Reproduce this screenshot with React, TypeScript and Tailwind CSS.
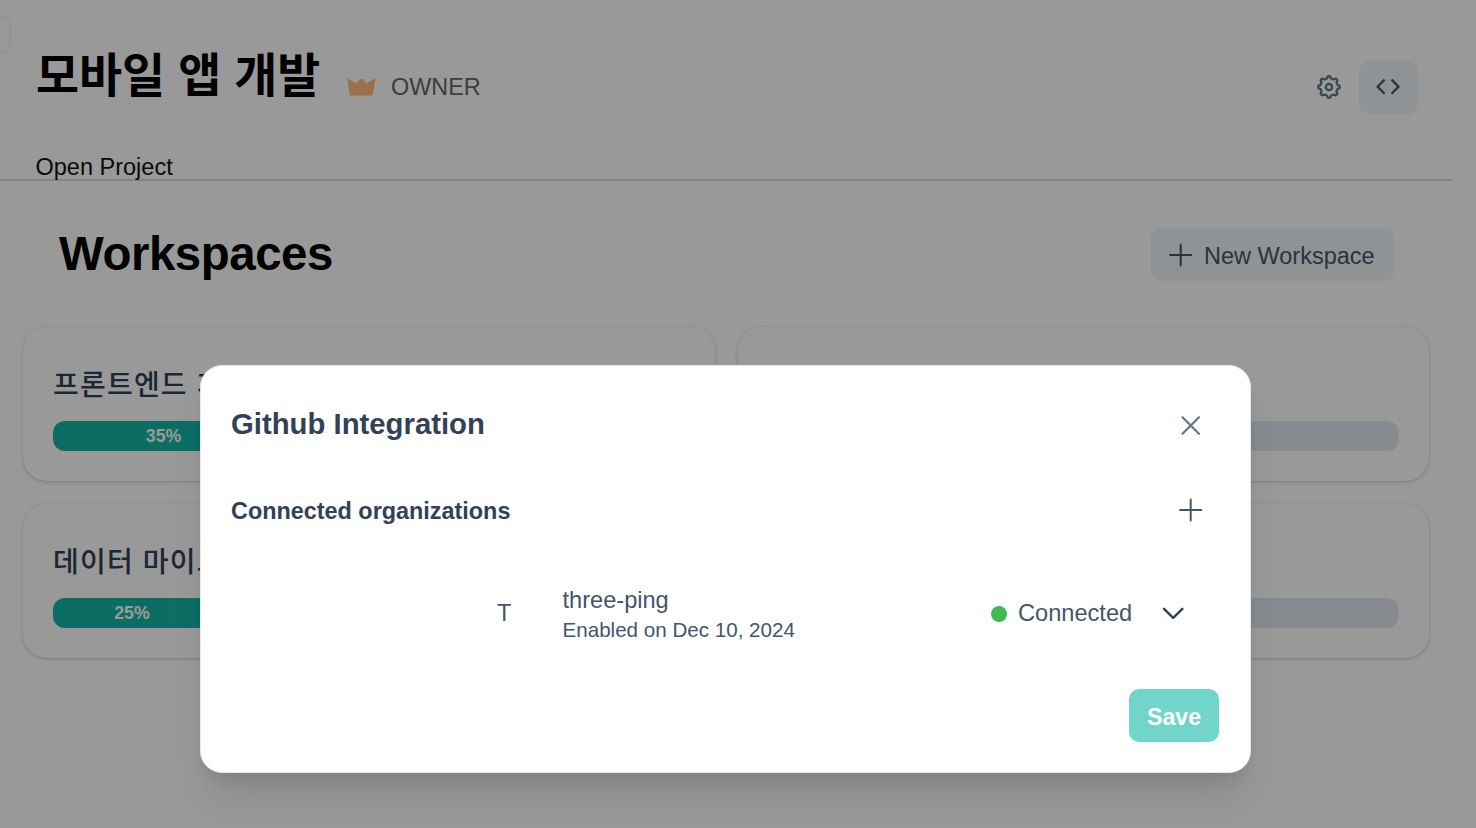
import React from "react";

const strokeProps = { fill: "none", stroke: "currentColor", strokeLinecap: "round" as const, strokeLinejoin: "round" as const };

function gearPath() {
  const pts: string[] = [];
  for (let i = 0; i < 8; i++) {
    const a = (i * Math.PI) / 4;
    const p = (r: number, d: number) => `${(13 + r * Math.sin(a + d)).toFixed(2)},${(13 - r * Math.cos(a + d)).toFixed(2)}`;
    pts.push(`${i === 0 ? "M" : "L"}${p(9, -0.21)} Q${p(10.9, -0.17)} ${p(10.9, 0)} Q${p(10.9, 0.17)} ${p(9, 0.21)} Q${p(8.2, 0.393)} ${p(9, 0.575)}`);
  }
  return pts.join(" ") + " Z";
}

function Gear() {
  return (
    <svg width="26" height="26" viewBox="0 0 26 26" {...strokeProps} strokeWidth="2.3">
      <path d={gearPath()} />
      <circle cx="13" cy="13" r="3.1" />
    </svg>
  );
}

function Code() {
  return (
    <svg width="26" height="26" viewBox="0 0 26 26" {...strokeProps} strokeWidth="2.3" strokeLinecap="butt" strokeLinejoin="miter">
      <path d="M8.6 5.6 1.7 12.7 8.6 19.8M15.6 5.6 22.5 12.7 15.6 19.8" />
    </svg>
  );
}

function Plus() {
  return (
    <svg width="24" height="24" viewBox="0 0 24 24" {...strokeProps} strokeWidth="2">
      <path d="M11.7 1.4v21.2M1.1 12h21.2" />
    </svg>
  );
}

function Crown() {
  return (
    <svg width="29" height="18" viewBox="0 0 29 18" fill="#fdbb7a">
      <path d="M0 0 8.8 5.6 14.3 .2 19.8 5.6 28.6 0 25.6 17.6H3Z" />
    </svg>
  );
}

function Card({ title, value, width }: { title: string; value?: string; width: string }) {
  return (
    <div className="h-[154px] rounded-[24px] bg-white px-[30px] pt-[39px] shadow-[0_1px_4px_rgba(0,0,0,0.14),0_1px_2px_rgba(0,0,0,0.08)]">
      <div className="h-[36px] whitespace-nowrap text-[28px] leading-[39px] font-medium tracking-[1.2px] text-slate-700">{title}</div>
      <div className="mt-[19.4px] h-[30px] overflow-hidden rounded-[12px] bg-slate-200">
        {value && (
          <div className="flex h-full items-center justify-center bg-[#14b8a6] pt-px text-[17.7px] font-semibold text-white" style={{ width }}>
            {value}
          </div>
        )}
      </div>
    </div>
  );
}

export default function App() {
  return (
    <div className="relative h-[828px] w-[1476px] overflow-hidden bg-white font-['Liberation_Sans','Noto_Sans_CJK_KR',sans-serif]">
      <div className="absolute top-[17px] -left-[40px] h-[36px] w-[51px] rounded-[9px] border-2 border-slate-100" />
      <header className="flex h-[181px] w-[1453px] flex-col justify-between border-b-2 border-[#dcdcdc]">
        <div className="flex items-start justify-between pr-[35px] pl-[36px]">
          <div className="flex">
            <h1 className="mt-[41px] w-[311px] whitespace-nowrap text-[46.8px] leading-[70px] font-bold text-black">모바일 앱 개발</h1>
            <div className="mt-[78px]"><Crown /></div>
            <span className="mt-[72px] ml-[15px] text-[23.4px] leading-[30px] text-[#666]">OWNER</span>
          </div>
          <div className="mt-[60px] flex items-center gap-[17px]">
            <span className="text-slate-500"><Gear /></span>
            <span className="mt-px flex h-[53px] w-[59px] items-center justify-center rounded-[10px] bg-slate-100 pb-px text-slate-600"><Code /></span>
          </div>
        </div>
        <div className="h-[26px] pl-[35.5px] text-[23.5px] leading-[28px] text-[#111]">Open Project</div>
      </header>
      <div className="flex h-[145.6px] items-start justify-between pr-[82px] pl-[59px]">
        <h2 className="mt-[43px] text-[47.4px] leading-[60px] font-bold tracking-[-0.45px] text-black">Workspaces</h2>
        <button className="mt-[47px] flex h-[53px] w-[243px] items-center gap-[11px] rounded-[10px] bg-slate-100 pl-[18px] text-[23.5px] whitespace-nowrap text-slate-600">
          <Plus />
          <span className="pt-[4px]">New Workspace</span>
        </button>
      </div>
      <main className="grid w-[1429px] grid-cols-2 gap-[23px] pl-[23px]">
        <Card title="프론트엔드 개발" value="35%" width="35%" />
        <Card title="백엔드 개발" width="0%" />
        <Card title="데이터 마이그레이션" value="25%" width="25%" />
        <Card title="배포" width="0%" />
      </main>
      <div className="absolute inset-0 bg-black/40">
        <section className="absolute top-[365px] left-[200px] flex h-[408px] w-[1051px] flex-col rounded-[22px] border border-slate-200 bg-white px-[30px] text-slate-600 shadow-[0_30px_37px_-7px_rgba(0,0,0,0.1),0_12px_15px_-9px_rgba(0,0,0,0.1)]">
          <div className="mt-[40px] flex h-[38px] items-center justify-between pr-[17px] text-slate-700">
            <h3 className="pb-[2px] text-[29.3px] leading-[36px] font-semibold">Github Integration</h3>
            <svg className="text-slate-500" width="24" height="24" viewBox="0 0 24 24" {...strokeProps} strokeWidth="2.2"><path d="M3.5 4.3l16.5 16.5M20 4.3l-16.5 16.5" /></svg>
          </div>
          <div className="mt-[47px] flex h-[38px] items-center justify-between pr-[17px]">
            <h4 className="pt-[3px] text-[23.4px] font-semibold text-slate-700">Connected organizations</h4>
            <Plus />
          </div>
          <div className="mt-[54px] flex h-[62px] items-center pl-[266px] text-[23.6px]">
            <span className="w-[65px]">T</span>
            <div className="w-[429px] pl-[0.5px]">
              <div className="leading-[32px]">three-ping</div>
              <div className="-mt-px text-[20.6px] leading-[29px]">Enabled on Dec 10, 2024</div>
            </div>
            <span className="mr-[11px] size-[16px] rounded-full bg-[#3fb950]" />
            <span>Connected</span>
            <svg className="ml-[29px] text-slate-700" width="24" height="24" viewBox="0 0 24 24" {...strokeProps} strokeWidth="2.4"><path d="M3 6.8l9.2 9 9.2-9" /></svg>
          </div>
          <button className="mt-[44px] mr-px h-[53px] w-[90px] self-end rounded-[10px] bg-[#72d5ca] pt-[3px] text-[23.2px] font-semibold text-white">Save</button>
        </section>
      </div>
    </div>
  );
}
